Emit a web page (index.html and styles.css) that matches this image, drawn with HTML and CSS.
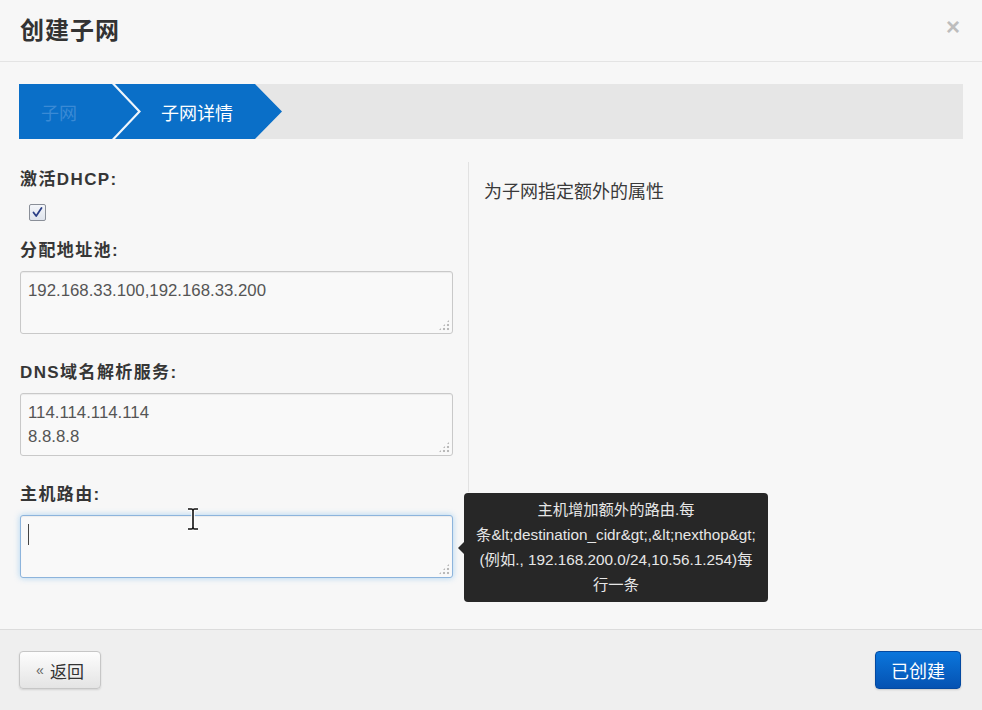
FILE: index.html
```html
<!DOCTYPE html>
<html lang="zh-CN">
<head>
<meta charset="utf-8">
<title>创建子网</title>
<link rel="stylesheet" href="styles.css">
</head>
<body>
<div class="modal">
  <div class="modal-header">
    <h3 class="title">创建子网</h3>
    <span class="close">×</span>
  </div>
  <div class="modal-body">
    <div class="wizard">
      <div class="step step-done"><span class="step-text">子网</span></div>
      <div class="step step-active"><span class="step-text">子网详情</span></div>
    </div>
    <div class="content">
      <div class="left">
        <div class="label">激活DHCP:</div>
        <div class="checkbox">
          <svg viewBox="0 0 15 15" width="15" height="15"><path d="M3.5 7.5 L6.2 11 L11.5 3" fill="none" stroke="#2b3f86" stroke-width="1.8" stroke-linecap="round" stroke-linejoin="round"/></svg>
        </div>
        <div class="label">分配地址池:</div>
        <div class="textarea">192.168.33.100,192.168.33.200</div>
        <div class="label">DNS域名解析服务:</div>
        <div class="textarea">114.114.114.114<br>8.8.8.8</div>
        <div class="label">主机路由:</div>
        <div class="field">
          <div class="textarea focused"><span class="caret"></span></div>
          <svg class="ibeam" viewBox="0 0 14 24" width="14" height="24"><path d="M2 2 H5.5 Q7 2 7 4 Q7 2 8.5 2 H12 M7 4 V20 M2 22 H5.5 Q7 22 7 20 Q7 22 8.5 22 H12" fill="none" stroke="#fff" stroke-width="3.5"/><path d="M2 2 H5.5 Q7 2 7 4 Q7 2 8.5 2 H12 M7 4 V20 M2 22 H5.5 Q7 22 7 20 Q7 22 8.5 22 H12" fill="none" stroke="#111" stroke-width="1.6"/></svg>
          <div class="tooltip">主机增加额外的路由.每<br>条&amp;lt;destination_cidr&amp;gt;,&amp;lt;nexthop&amp;gt;<br>(例如., 192.168.200.0/24,10.56.1.254)每<br>行一条</div>
        </div>
      </div>
      <div class="right">
        <p class="help">为子网指定额外的属性</p>
      </div>
    </div>
  </div>
  <div class="modal-footer">
    <button class="btn btn-back"><span class="raquo">«</span>返回</button>
    <button class="btn btn-primary">已创建</button>
  </div>
</div>
</body>
</html>
```
FILE: styles.css
```css
html, body {
  margin: 0;
  padding: 0;
  height: 100%;
}
body {
  background: #f7f7f7;
  font-family: "Liberation Sans", "Noto Sans CJK SC", sans-serif;
  color: #333;
}
.modal {
  display: flex;
  flex-direction: column;
  height: 710px;
  width: 982px;
}
.modal-header {
  height: 61px;
  border-bottom: 1px solid #e4e4e4;
  display: flex;
  align-items: center;
  justify-content: space-between;
  padding: 0 20px;
  flex-shrink: 0;
}
.title {
  margin: -5px 0 0;
  font-size: 24px;
  font-weight: 700;
  color: #333;
  letter-spacing: 1px;
}
.close {
  font-size: 24px;
  font-weight: 700;
  color: #bdbdbd;
  margin-top: -8px;
  margin-right: 2px;
  line-height: 1;
}
.modal-body {
  flex: 1;
}
.wizard {
  margin: 22px 19px 0;
  height: 55px;
  background: #e6e6e6;
  display: flex;
}
.step {
  display: flex;
  align-items: center;
  height: 100%;
  position: relative;
  font-size: 18px;
}
.step-done {
  width: 122px;
  background: #eef5fc;
  clip-path: polygon(0 0, 96px 0, 122px 50%, 96px 100%, 0 100%);
  padding-left: 22px;
  box-sizing: border-box;
}
.step-done::before {
  content: "";
  position: absolute;
  inset: 0;
  background: #0a6fc8;
  clip-path: polygon(0 0, 93px 0, 119px 50%, 93px 100%, 0 100%);
}
.step-done .step-text {
  position: relative;
  color: #3a8ad5;
}
.step-active {
  margin-left: -26px;
  width: 167px;
  background: #0a6fc8;
  clip-path: polygon(0 0, 140px 0, 167px 50%, 140px 100%, 0 100%, 26px 50%);
  padding-left: 46px;
  box-sizing: border-box;
  color: #fff;
}
.content {
  display: flex;
  padding: 23px 20px 0;
}
.left {
  width: 433px;
  padding-top: 6px;
}
.label {
  font-size: 17px;
  font-weight: 700;
  line-height: 24px;
  letter-spacing: 1.4px;
  color: #363636;
}
.checkbox {
  width: 15px;
  height: 15px;
  margin: 12px 0 18px 9px;
  border: 1px solid #8a8f98;
  border-radius: 2px;
  background: linear-gradient(#f4f6fa, #dfe4ec);
  display: flex;
}
.textarea {
  position: relative;
  height: 55px;
  border: 1px solid #c9c9c9;
  border-radius: 3px;
  background: #f9f9f9;
  box-shadow: inset 0 1px 1px rgba(0, 0, 0, 0.06);
  padding: 7px 7px 0;
  box-sizing: content-box;
  width: 417px;
  font-size: 16.8px;
  line-height: 24px;
  color: #555;
  margin: 8px 0 27px;
  height: 54px;
}
.textarea::after {
  content: "";
  position: absolute;
  right: 2px;
  bottom: 2px;
  width: 12px;
  height: 12px;
  background: radial-gradient(circle, #b9b9b9 1px, transparent 1.6px) 0 0 / 4px 4px;
  clip-path: polygon(100% 0, 100% 100%, 0 100%);
}
.textarea.focused {
  border-color: #8db4dc;
  box-shadow: 0 0 6px rgba(82, 168, 236, 0.45), inset 0 1px 1px rgba(0, 0, 0, 0.05);
  margin-bottom: 0;
}
.caret {
  display: block;
  width: 1px;
  height: 21px;
  margin-top: 1px;
  background: #444;
}
.field {
  position: relative;
}
.ibeam {
  position: absolute;
  left: 166px;
  top: -8px;
}
.tooltip {
  position: absolute;
  left: 444px;
  top: -22px;
  width: 284px;
  padding: 4px 10px 5px;
  background: #272727;
  border-radius: 4px;
  color: #e6e6e6;
  font-size: 15.3px;
  line-height: 25px;
  text-align: center;
  white-space: nowrap;
}
.tooltip::before {
  content: "";
  position: absolute;
  left: -6px;
  top: 49px;
  border-style: solid;
  border-width: 6px 6px 6px 0;
  border-color: transparent #272727 transparent transparent;
}
.right {
  margin-left: 15px;
  border-left: 1px solid #e2e2e2;
  padding-left: 15px;
  height: 330px;
}
.help {
  margin: 18px 0 0;
  font-size: 18px;
  line-height: 24px;
  color: #3a3a3a;
}
.modal-footer {
  flex-shrink: 0;
  height: 81px;
  border-top: 1px solid #dcdcdc;
  background: #efefef;
  display: flex;
  justify-content: space-between;
  align-items: flex-start;
  padding: 21px 21px 0 19px;
  box-sizing: border-box;
}
.btn {
  height: 38px;
  border-radius: 4px;
  font-family: "Liberation Sans", "Noto Sans CJK SC", sans-serif;
  cursor: pointer;
  padding: 0;
}
.btn-back {
  width: 82px;
  border: 1px solid #c6c6c6;
  background: linear-gradient(#fdfdfd, #e4e4e4);
  box-shadow: 0 1px 2px rgba(0, 0, 0, 0.12);
  color: #333;
  font-size: 17px;
  display: flex;
  align-items: center;
  justify-content: center;
}
.raquo {
  font-size: 14px;
  color: #666;
  margin-right: 6px;
}
.btn-primary {
  width: 86px;
  border: 1px solid #0449a0;
  background: linear-gradient(#0b76dc, #0552b2);
  color: #fff;
  font-size: 18px;
  box-shadow: 0 1px 2px rgba(0, 0, 0, 0.15);
}
```
